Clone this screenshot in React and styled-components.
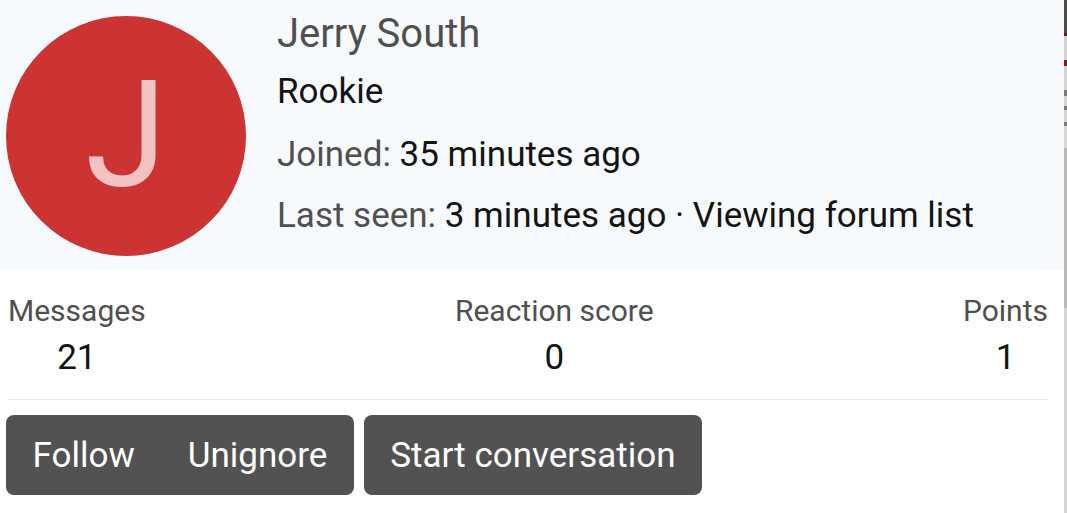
import React from "react";
import styled, { createGlobalStyle } from "styled-components";

const Global = createGlobalStyle`
  html, body { margin: 0; padding: 0; background: #ffffff; }
  body { font-family: Roboto, "Liberation Sans", sans-serif; }
  * { box-sizing: border-box; }
`;

const Page = styled.div`
  display: flex;
  width: 1067px;
  height: 513px;
  overflow: hidden;
`;

const Card = styled.div`
  width: 1064px;
  display: flex;
  flex-direction: column;
  background: #ffffff;
`;

const EdgeStrip = styled.div`
  flex: 1;
  background: linear-gradient(
    to bottom,
    #4a4a4a 0 33px, #7a1414 33px 36px, #d2d2d2 36px 60px,
    #8b1616 60px 66px, #d4d4d4 66px 90px, #7a7a7a 90px 96px,
    #d4d4d4 96px 106px, #7a7a7a 106px 110px, #d4d4d4 110px 122px,
    #7a7a7a 122px 126px, #d8d8d8 126px 148px, #b9b9b9 148px 308px,
    #d6d6d6 308px 513px
  );
`;

const Header = styled.div`
  display: flex;
  align-items: flex-start;
  gap: 31px;
  padding: 16px 6px 14px;
  background: #f7fafd;
`;

const Avatar = styled.div`
  width: 240px;
  height: 240px;
  border-radius: 50%;
  background: #cc3333;
  color: #f3c3c3;
  display: flex;
  align-items: center;
  justify-content: center;
  font-size: 148px;
  line-height: 1;
  flex-shrink: 0;
`;

const Info = styled.div`
  display: flex;
  flex-direction: column;
`;

const Name = styled.div`
  font-size: 40px;
  line-height: 36px;
  color: #505050;
`;

const Title = styled.div`
  font-size: 35px;
  line-height: 49px;
  margin-top: 15px;
  color: #141414;
`;

const Row = styled.div`
  font-size: 35px;
  line-height: 45px;
  margin-top: 16px;
  color: #141414;
`;

const Label = styled.span`
  color: #505050;
`;

const Stats = styled.div`
  display: flex;
  justify-content: space-between;
  margin: 0 16px 0 8px;
  padding: 18px 0 17px;
  border-bottom: 1px solid #e8e8e8;
`;

const Stat = styled.dl`
  margin: 0;
  text-align: center;
`;

const StatLabel = styled.dt`
  font-size: 30px;
  line-height: 45px;
  color: #505050;
`;

const StatValue = styled.dd`
  margin: 0;
  font-size: 35px;
  line-height: 49px;
  color: #141414;
`;

const Actions = styled.div`
  display: flex;
  gap: 10px;
  padding: 15px 6px 0;
`;

const ButtonGroup = styled.div`
  display: flex;
  background: #525252;
  border-radius: 8px;
  height: 80px;
`;

const Button = styled.button`
  border: 0;
  background: transparent;
  color: #ffffff;
  font-family: Roboto, "Liberation Sans", sans-serif;
  font-size: 35px;
  padding: 0 26.5px;
  height: 80px;
  cursor: pointer;
`;

export default function App() {
  return (
    <>
      <Global />
      <Page>
        <Card>
          <Header>
            <Avatar>J</Avatar>
            <Info>
              <Name>Jerry South</Name>
              <Title>Rookie</Title>
              <Row>
                <Label>Joined:</Label> 35 minutes ago
              </Row>
              <Row>
                <Label>Last seen:</Label> 3 minutes ago · Viewing forum list
              </Row>
            </Info>
          </Header>
          <Stats>
            <Stat>
              <StatLabel>Messages</StatLabel>
              <StatValue>21</StatValue>
            </Stat>
            <Stat>
              <StatLabel>Reaction score</StatLabel>
              <StatValue>0</StatValue>
            </Stat>
            <Stat>
              <StatLabel>Points</StatLabel>
              <StatValue>1</StatValue>
            </Stat>
          </Stats>
          <Actions>
            <ButtonGroup>
              <Button>Follow</Button>
              <Button>Unignore</Button>
            </ButtonGroup>
            <ButtonGroup>
              <Button>Start conversation</Button>
            </ButtonGroup>
          </Actions>
        </Card>
        <EdgeStrip />
      </Page>
    </>
  );
}
